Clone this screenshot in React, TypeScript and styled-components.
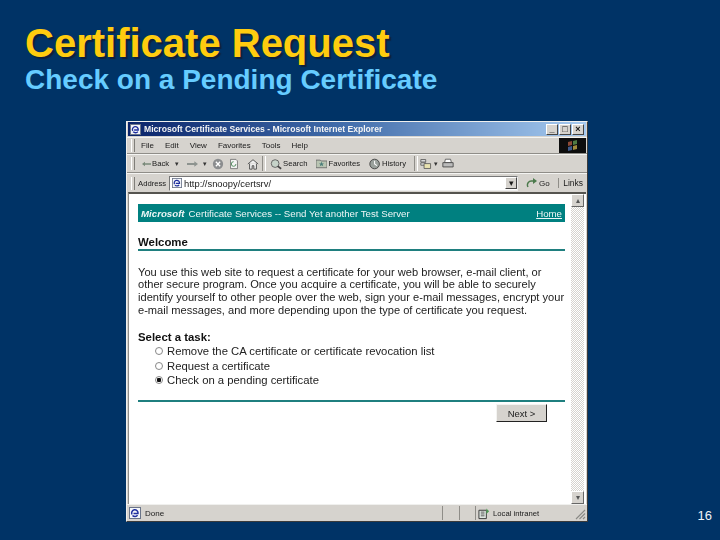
import React from 'react';
import styled, { createGlobalStyle } from 'styled-components';

const GlobalStyle = createGlobalStyle`
  html, body {
    margin: 0;
    padding: 0;
    background: #003366;
  }
`;

const menuItems = ['File', 'Edit', 'View', 'Favorites', 'Tools', 'Help'];

const tasks = [
  { label: 'Remove the CA certificate or certificate revocation list', checked: false },
  { label: 'Request a certificate', checked: false },
  { label: 'Check on a pending certificate', checked: true },
];

const App: React.FC = () => {
  return (
    <Slide>
      <GlobalStyle />
      <Title>Certificate Request</Title>
      <Subtitle>Check on a Pending Certificate</Subtitle>
      <Window>
        <TitleBar>
          <IeIcon size={11} />
          <TitleText>Microsoft Certificate Services - Microsoft Internet Explorer</TitleText>
          <WinButton>_</WinButton>
          <WinButton>□</WinButton>
          <WinButton>×</WinButton>
        </TitleBar>

        <MenuRow>
          <Grip />
          {menuItems.map((item) => (
            <MenuItem key={item}>{item}</MenuItem>
          ))}
          <Flag>
            <svg width="14" height="14" viewBox="0 0 14 14">
              <path d="M2 3l4-1v4l-4 1z" fill="#8e4a36" />
              <path d="M7 2l4-1v4l-4 1z" fill="#4f7a42" />
              <path d="M2 8l4-1v4l-4 1z" fill="#3f5a8c" />
              <path d="M7 7l4-1v4l-4 1z" fill="#a08a3c" />
            </svg>
          </Flag>
        </MenuRow>

        <ToolRow>
          <Grip />
          <ToolLabel $ml={1}>
            <svg width="9" height="8" viewBox="0 0 12 8">
              <path d="M0 4l4-3v2h8v2H4v2z" fill="#7a8a7a" />
            </svg>
            Back
          </ToolLabel>
          <Caret $ml={6}>▾</Caret>
          <ToolIcon $ml={8}>
            <svg width="11" height="8" viewBox="0 0 12 8">
              <path d="M12 4L8 1v2H0v2h8v2z" fill="#8d938f" />
            </svg>
          </ToolIcon>
          <Caret $ml={5}>▾</Caret>
          <ToolIcon $ml={5}>
            <svg width="12" height="12" viewBox="0 0 14 14">
              <circle cx="7" cy="7" r="6" fill="#8b8d8f" />
              <path d="M4.500 4.500l5 5M9.500 4.500l-5 5" stroke="#fff" strokeWidth="1.600" />
            </svg>
          </ToolIcon>
          <ToolIcon $ml={5}>
            <svg width="10" height="12" viewBox="0 0 13 14">
              <path d="M2 1h7l2 2v10H2z" fill="#f4f4f4" stroke="#666" />
              <path d="M6 4a3 3 0 1 0 3 3" fill="none" stroke="#4d8a5a" strokeWidth="1.200" />
            </svg>
          </ToolIcon>
          <ToolIcon $ml={8}>
            <svg width="12" height="12" viewBox="0 0 14 14">
              <path d="M1 7l6-5 6 5M3 6.500V13h3V9h2v4h3V6.500" fill="#eee" stroke="#444" />
            </svg>
          </ToolIcon>
          <ToolDivider $ml={3} />
          <ToolLabel $ml={4}>
            <svg width="12" height="12" viewBox="0 0 14 13">
              <circle cx="6" cy="6" r="4.500" fill="#c6d3c9" stroke="#555" />
              <path d="M9 9l4 3" stroke="#444" strokeWidth="2" />
            </svg>
            Search
          </ToolLabel>
          <ToolLabel $ml={9}>
            <svg width="11" height="11" viewBox="0 0 13 12">
              <path d="M0 2h5l1 1h7v8H0z" fill="#b9c4b2" stroke="#666" />
              <path d="M6.500 4l1 2h2l-1.600 1.300.6 2-2-1.200-2 1.200.6-2L3.500 6h2z" fill="#4d7f7a" />
            </svg>
            Favorites
          </ToolLabel>
          <ToolLabel $ml={9}>
            <svg width="12" height="12" viewBox="0 0 15 14">
              <circle cx="7" cy="7" r="6" fill="#9aa19c" stroke="#333" />
              <path d="M7 3v4l3 2" stroke="#fff" strokeWidth="1.300" fill="none" />
            </svg>
            History
          </ToolLabel>
          <ToolDivider $ml={8} />
          <ToolIcon $ml={2}>
            <svg width="13" height="12" viewBox="0 0 16 13">
              <path d="M1 1h6v3H1zM1 5h6v3H1z" fill="#ddd" stroke="#555" />
              <path d="M5 6h8v6H5z" fill="#e8e2b0" stroke="#555" />
            </svg>
          </ToolIcon>
          <Caret $ml={1}>▾</Caret>
          <ToolIcon $ml={4}>
            <svg width="12" height="11" viewBox="0 0 14 12">
              <path d="M4 1h6l1 4H3z" fill="#fff" stroke="#555" />
              <path d="M1 5h12v5H1z" fill="#bbb" stroke="#444" />
            </svg>
          </ToolIcon>
        </ToolRow>

        <AddressRow>
          <Grip />
          <AddressLabel>Address</AddressLabel>
          <AddressField>
            <IeIcon size={10} />
            <span>http://snoopy/certsrv/</span>
            <ComboArrow>▾</ComboArrow>
          </AddressField>
          <GoLabel>
            <svg width="12" height="13" viewBox="0 0 12 13">
              <path d="M2 10a4 4 0 0 1 4-6h2" fill="none" stroke="#4c7a4c" strokeWidth="1.400" />
              <path d="M7 1l4 3-4 3z" fill="#4c7a4c" />
            </svg>
            Go
          </GoLabel>
          <LinksLabel>Links</LinksLabel>
        </AddressRow>

        <Viewport>
          <Page>
            <Banner>
              <BannerBrand>Microsoft</BannerBrand>
              <BannerText>Certificate Services -- Send Yet another Test Server</BannerText>
              <HomeLink>Home</HomeLink>
            </Banner>
            <Welcome>Welcome</Welcome>
            <Rule />
            <Intro>
              You use this web site to request a certificate for your web browser, e-mail client, or
              other secure program. Once you acquire a certificate, you will be able to securely
              identify yourself to other people over the web, sign your e-mail messages, encrypt your
              e-mail messages, and more depending upon the type of certificate you request.
            </Intro>
            <TaskHeading>Select a task:</TaskHeading>
            <TaskList>
              {tasks.map((task) => (
                <TaskRow key={task.label}>
                  <Radio $checked={task.checked} />
                  {task.label}
                </TaskRow>
              ))}
            </TaskList>
            <BottomRule />
            <ButtonRow>
              <NextButton>Next &gt;</NextButton>
            </ButtonRow>
          </Page>
          <Scrollbar>
            <ScrollButton>▴</ScrollButton>
            <ScrollTrack />
            <ScrollButton>▾</ScrollButton>
          </Scrollbar>
        </Viewport>

        <StatusBar>
          <StatusMain>
            <IeIcon size={12} />
            Done
          </StatusMain>
          <StatusCell $w={17} />
          <StatusCell $w={16} />
          <StatusZone>
            <svg width="13" height="13" viewBox="0 0 14 13">
              <path d="M1 3h8v9H1z" fill="#dfe7e2" stroke="#333" />
              <path d="M3 5h4M3 7h4M3 9h4" stroke="#555" />
              <path d="M9 1l3 3-3 3z" fill="#4f9a55" />
            </svg>
            Local intranet
          </StatusZone>
          <Resize>
            <svg width="11" height="11" viewBox="0 0 11 11">
              <path d="M10 1L1 10M10 4.500L4.500 10M10 8L8 10" stroke="#8a8a86" strokeWidth="1.100" />
            </svg>
          </Resize>
        </StatusBar>
      </Window>
      <PageNumber>16</PageNumber>
    </Slide>
  );
};

const IeIcon: React.FC<{ size: number }> = ({ size }) => (
  <svg width={size} height={size} viewBox="0 0 12 12">
    <rect x="0.500" y="0.500" width="11" height="11" fill="#f4f6fa" stroke="#6a7488" />
    <path d="M3 7.500a3.200 3.200 0 1 1 6-1H4.500M3.500 8.500c1.500 1.500 4 1.300 5-.3" fill="none" stroke="#1f2f9e" strokeWidth="1.500" />
  </svg>
);

export default App;

const Slide = styled.div`
  position: relative;
  box-sizing: border-box;
  display: flex;
  flex-direction: column;
  width: 720px;
  height: 540px;
  padding: 21px 0 0 25px;
  overflow: hidden;
  background: #003366;
  font-family: 'Liberation Sans', Arial, sans-serif;
`;

const Title = styled.h1`
  margin: 0;
  font-size: 40px;
  line-height: 44px;
  font-weight: 700;
  color: #ffcc0f;
  text-shadow: 2px 2px 1px #10203a;
  white-space: nowrap;
`;

const Subtitle = styled.h2`
  margin: -1px 0 0;
  font-size: 28px;
  line-height: 32px;
  font-weight: 700;
  color: #66ccff;
  white-space: nowrap;
`;

const Window = styled.div`
  box-sizing: border-box;
  display: flex;
  flex-direction: column;
  width: 462px;
  height: 401px;
  margin: 25px 0 0 101px;
  border: 1px solid #f0f0ee;
  border-right-color: #3b3b3b;
  border-bottom-color: #3b3b3b;
  background: #d6d3ce;
  color: #1a1a1a;
  font-size: 8px;
  filter: blur(0.4px);
`;

const TitleBar = styled.div`
  display: flex;
  align-items: center;
  gap: 3px;
  height: 14px;
  margin: 0 1px;
  padding: 0 2px;
  background: linear-gradient(90deg, #0a246a 0%, #3f6aa8 45%, #a6caf0 100%);
`;

const TitleText = styled.span`
  flex: 1;
  font-size: 8.600px;
  font-weight: 700;
  color: #f4f4f4;
  white-space: nowrap;
`;

const WinButton = styled.span`
  display: flex;
  align-items: center;
  justify-content: center;
  width: 12px;
  height: 11px;
  margin-left: -2px;
  background: #d6d3ce;
  border: 1px solid;
  border-color: #fff #444 #444 #fff;
  box-sizing: border-box;
  font-size: 9px;
  font-weight: 700;
  line-height: 1;
  color: #111;
`;

const MenuRow = styled.div`
  display: flex;
  align-items: center;
  height: 15px;
  margin-top: 1px;
  padding-left: 4px;
  border-top: 1px solid #f4f4f2;
  border-bottom: 1px solid #8f8d88;
`;

const Grip = styled.span`
  width: 2px;
  height: 13px;
  margin-right: 6px;
  border-left: 1px solid #fff;
  border-right: 1px solid #807e79;
`;

const MenuItem = styled.span`
  margin-right: 11px;
  font-size: 8px;
`;

const Flag = styled.span`
  display: flex;
  align-items: center;
  justify-content: center;
  width: 27px;
  height: 15px;
  margin-left: auto;
  margin-right: 1px;
  background: #0d0d0d;
`;

const ToolRow = styled.div`
  display: flex;
  align-items: center;
  height: 17px;
  padding-left: 4px;
  border-top: 1px solid #f4f4f2;
  border-bottom: 1px solid #8f8d88;
`;

const ToolLabel = styled.span<{ $ml: number }>`
  display: flex;
  align-items: center;
  gap: 1px;
  margin-left: ${(props) => props.$ml}px;
  font-size: 7.700px;
`;

const ToolIcon = styled.span<{ $ml: number }>`
  display: flex;
  align-items: center;
  margin-left: ${(props) => props.$ml}px;
`;

const ToolDivider = styled.span<{ $ml: number }>`
  width: 2px;
  height: 15px;
  margin-left: ${(props) => props.$ml}px;
  border-left: 1px solid #8f8d88;
  border-right: 1px solid #fff;
`;

const Caret = styled.span<{ $ml: number }>`
  margin-left: ${(props) => props.$ml}px;
  font-size: 7px;
  color: #333;
`;

const AddressRow = styled.div`
  display: flex;
  align-items: center;
  height: 18px;
  padding-left: 4px;
  border-top: 1px solid #f4f4f2;
`;

const AddressLabel = styled.span`
  width: 31px;
  margin-left: -3px;
  font-size: 7.700px;
`;

const AddressField = styled.div`
  box-sizing: border-box;
  display: flex;
  align-items: center;
  gap: 2px;
  width: 349px;
  height: 15px;
  padding-left: 2px;
  background: #fff;
  border: 1px solid;
  border-color: #777 #eee #eee #777;
  font-size: 9.400px;
`;

const ComboArrow = styled.span`
  display: flex;
  align-items: center;
  justify-content: center;
  width: 12px;
  height: 12px;
  margin-left: auto;
  background: #d6d3ce;
  border: 1px solid;
  border-color: #fff #444 #444 #fff;
  box-sizing: border-box;
  font-size: 9px;
`;

const GoLabel = styled.span`
  display: flex;
  align-items: center;
  gap: 1px;
  margin-left: 8px;
  font-size: 8px;
`;

const LinksLabel = styled.span`
  margin-left: auto;
  padding-left: 4px;
  padding-right: 4px;
  border-left: 1px solid #8f8d88;
  font-size: 8.500px;
`;

const Viewport = styled.div`
  flex: 1;
  display: flex;
  min-height: 0;
  margin: 0 1px;
  background: #fff;
  border-top: 2px solid #55544f;
  border-left: 1px solid #8f8d88;
`;

const Page = styled.div`
  flex: 1;
  min-width: 0;
  padding: 10px 6px 0 9px;
`;

const Banner = styled.div`
  display: flex;
  align-items: center;
  height: 18px;
  padding: 0 3px;
  background: #008080;
  color: #eef6f6;
  font-size: 9.700px;
`;

const BannerBrand = styled.span`
  margin-right: 4px;
  font-weight: 700;
  font-style: italic;
`;

const BannerText = styled.span`
  flex: 1;
  white-space: nowrap;
`;

const HomeLink = styled.span`
  text-decoration: underline;
`;

const Welcome = styled.div`
  margin-top: 14px;
  font-size: 11.400px;
  line-height: 13px;
  font-weight: 700;
  color: #111;
`;

const Rule = styled.div`
  height: 2px;
  background: #1f7f7f;
`;

const Intro = styled.p`
  margin: 14.500px 0 0;
  font-size: 11.100px;
  line-height: 12.800px;
  color: #222;
`;

const TaskHeading = styled.div`
  margin-top: 14.500px;
  font-size: 11.400px;
  line-height: 13px;
  font-weight: 700;
  color: #111;
`;

const TaskList = styled.div`
  display: flex;
  flex-direction: column;
  padding-left: 17px;
`;

const TaskRow = styled.div`
  display: flex;
  align-items: center;
  gap: 4px;
  height: 14.500px;
  font-size: 11.300px;
  color: #222;
  white-space: nowrap;
`;

const Radio = styled.span<{ $checked: boolean }>`
  box-sizing: border-box;
  width: 8px;
  height: 8px;
  border-radius: 50%;
  border: 1px solid #888;
  background: ${(props) => (props.$checked ? 'radial-gradient(circle, #111 0 2px, #fff 2.500px)' : '#fff')};
`;

const BottomRule = styled.div`
  height: 2px;
  margin-top: 12px;
  background: #1f7f7f;
`;

const ButtonRow = styled.div`
  display: flex;
  justify-content: flex-end;
  padding: 2.500px 18px 0 0;
`;

const NextButton = styled.div`
  box-sizing: border-box;
  display: flex;
  align-items: center;
  justify-content: center;
  width: 51px;
  height: 18px;
  background: #d6d3ce;
  border: 1px solid;
  border-color: #f4f4f2 #222 #222 #f4f4f2;
  font-size: 9.500px;
  color: #222;
`;

const Scrollbar = styled.div`
  display: flex;
  flex-direction: column;
  width: 13px;
  margin-right: 2px;
`;

const ScrollButton = styled.div`
  box-sizing: border-box;
  display: flex;
  align-items: center;
  justify-content: center;
  height: 13px;
  background: #d6d3ce;
  border: 1px solid;
  border-color: #fff #666 #666 #fff;
  font-size: 8px;
  color: #555;
`;

const ScrollTrack = styled.div`
  flex: 1;
  background: repeating-conic-gradient(#d6d3ce 0 25%, #ffffff 0 50%) 0 0 / 2px 2px;
`;

const StatusBar = styled.div`
  display: flex;
  align-items: center;
  height: 16px;
  border-top: 1px solid #f0f0ee;
  font-size: 7.700px;
`;

const StatusMain = styled.div`
  box-sizing: border-box;
  display: flex;
  align-items: center;
  gap: 4px;
  width: 315px;
  padding-left: 2px;
  font-size: 8px;
`;

const StatusCell = styled.div<{ $w: number }>`
  box-sizing: border-box;
  width: ${(props) => props.$w}px;
  height: 14px;
  border-left: 1px solid #8f8d88;
`;

const StatusZone = styled.div`
  box-sizing: border-box;
  display: flex;
  align-items: center;
  gap: 2px;
  flex: 1;
  height: 14px;
  padding-left: 2px;
  border-left: 1px solid #8f8d88;
`;

const Resize = styled.div`
  display: flex;
  align-items: flex-end;
  height: 14px;
  padding-right: 1px;
`;

const PageNumber = styled.div`
  position: absolute;
  right: 8px;
  bottom: 17px;
  font-size: 13px;
  line-height: 14px;
  color: #f0f4f8;
`;
